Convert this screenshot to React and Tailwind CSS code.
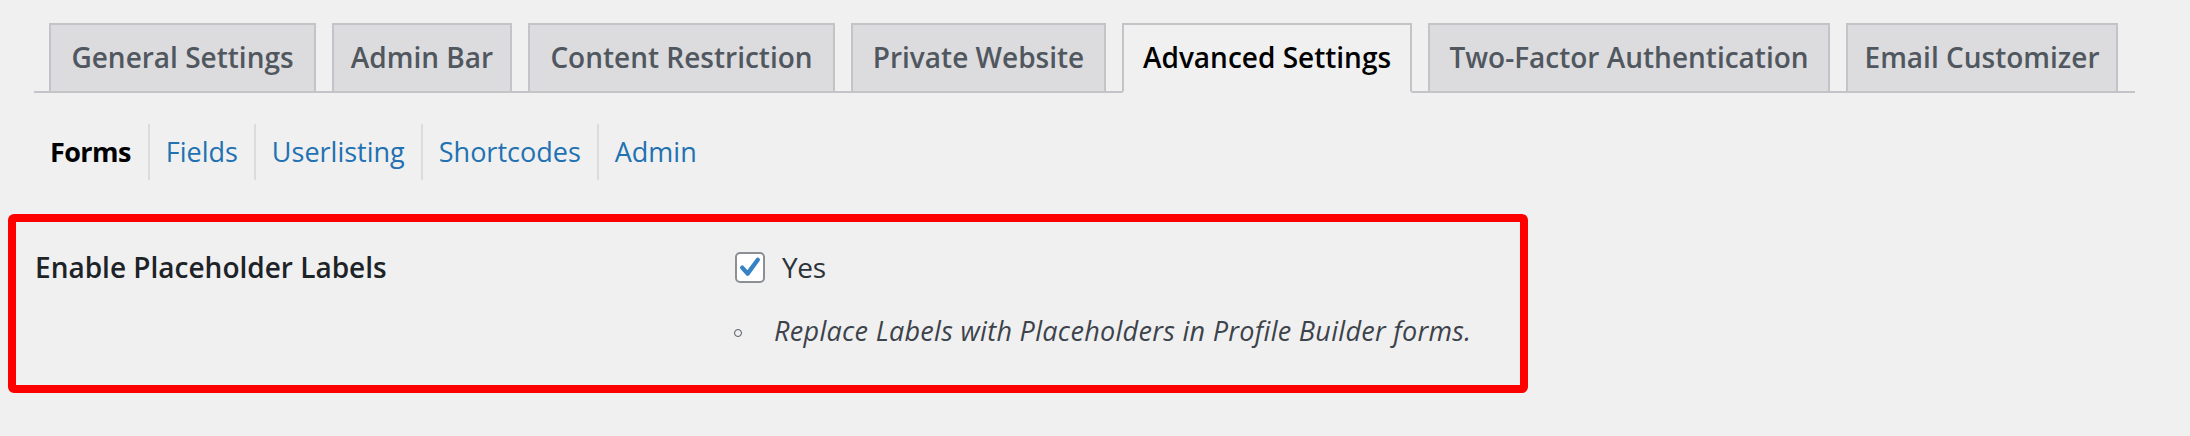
import { useState } from "react";

const tabs = [
    { label: "General Settings", w: "w-[267px]" },
    { label: "Admin Bar", w: "w-[180px]" },
    { label: "Content Restriction", w: "w-[307px]" },
    { label: "Private Website", w: "w-[255px]" },
    { label: "Advanced Settings", w: "w-[290px]" },
    { label: "Two-Factor Authentication", w: "w-[402px]" },
    { label: "Email Customizer", w: "w-[272px]" },
];

const subTabs = ["Forms", "Fields", "Userlisting", "Shortcodes", "Admin"];

export default function App() {
    const [active, setActive] = useState("Advanced Settings");
    const [sub, setSub] = useState("Forms");
    const [checked, setChecked] = useState(true);

    return (
        <div className="w-[2190px] h-[436px] bg-[#f0f0f1] font-['Open_Sans',sans-serif] overflow-hidden">
            {/* Onglets principaux */}
            <div className="pt-[23px] pl-[34px]">
                <div className="flex items-end gap-[16px] pl-[15px] w-[2101px] border-b-2 border-[#c3c4c7]">
                    {tabs.map((t) => (
                        <button
                            key={t.label}
                            type="button"
                            onClick={() => setActive(t.label)}
                            className={
                                t.label === active
                                    ? `${t.w} h-[70px] -mb-[2px] pb-[2px] flex items-center justify-center border-2 border-[#c3c4c7] border-b-[#f0f0f1] bg-[#f0f0f1] text-[28px] font-semibold text-black`
                                    : `${t.w} h-[70px] -mb-[2px] pb-[2px] flex items-center justify-center border-2 border-[#c3c4c7] bg-[#dcdcde] text-[28px] font-semibold text-[#50575e]`
                            }
                        >
                            {t.label}
                        </button>
                    ))}
                </div>
            </div>

            {/* Sous-navigation */}
            <div className="flex items-center pl-[50px] mt-[31px] h-[56px]">
                {subTabs.map((s, i) => (
                    <div
                        key={s}
                        className={i === 0 ? "h-[56px] flex items-center pr-[17px]" : "h-[56px] flex items-center px-[16px] border-l-2 border-[#dcdcde]"}
                    >
                        <button
                            type="button"
                            onClick={() => setSub(s)}
                            className={s === sub ? "text-[27px] font-bold text-black tracking-[-0.6px]" : "text-[27px] text-[#2271b1]"}
                        >
                            {s}
                        </button>
                    </div>
                ))}
            </div>

            {/* Encadré rouge */}
            <div className="ml-[8px] mt-[34px] w-[1520px] h-[179px] border-[8px] border-[#ff0000] rounded-[6px] flex">
                <div className="w-[719px] pl-[19px] pt-[27px]">
                    <p className="text-[28px] leading-[36px] font-semibold text-[#1d2327]">Enable Placeholder Labels</p>
                </div>
                <div className="pt-[27px]">
                    <label className="flex items-center gap-[17px] h-[36px] cursor-pointer">
                        <span
                            onClick={() => setChecked(!checked)}
                            className="w-[30px] h-[31px] rounded-[5px] border-2 border-[#8c8f94] bg-white flex items-center justify-center"
                        >
                            {checked && (
                                <svg viewBox="0 0 20 20" className="w-[24px] h-[24px]">
                                    <path d="M3.5 10.5 L8 15.5 L16.5 4" fill="none" stroke="#3582c4" strokeWidth="3.6" strokeLinecap="round" strokeLinejoin="round" />
                                </svg>
                            )}
                        </span>
                        <span className="text-[28px] leading-[36px] text-[#2c3338] tracking-[-0.3px]">Yes</span>
                    </label>
                    <div className="flex items-center mt-[28px] h-[36px]">
                        <span className="w-[8px] h-[8px] rounded-full border border-[#50575e] mt-[4px] ml-[-1px]"></span>
                        <p className="ml-[32px] text-[27px] leading-[36px] italic text-[#3c434a] tracking-[0.3px]">
                            Replace Labels with Placeholders in Profile Builder forms.
                        </p>
                    </div>
                </div>
            </div>
        </div>
    );
}
